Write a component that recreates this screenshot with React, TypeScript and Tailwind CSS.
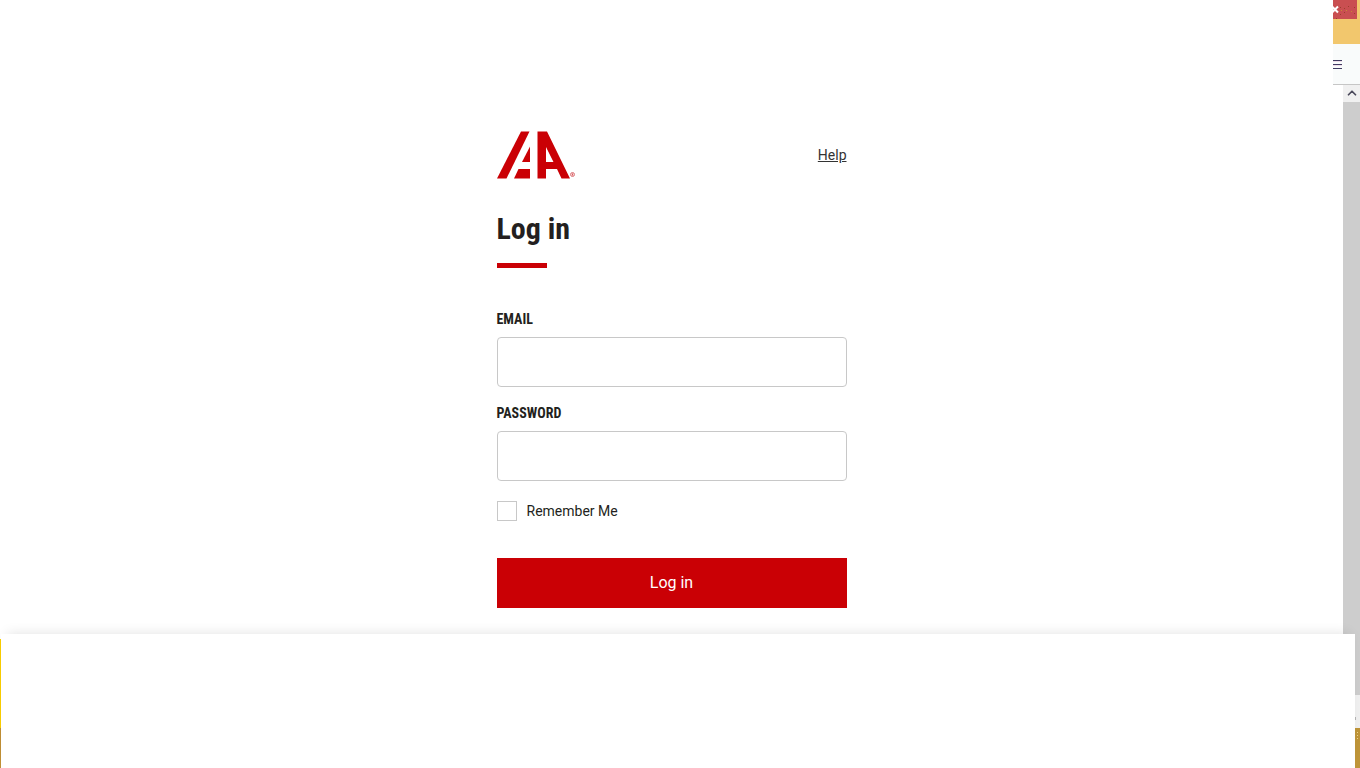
import { ChevronUp } from 'lucide-react';

const condensed = "font-['Roboto_Condensed','Roboto',sans-serif]";

function Logo() {
  return (
    <svg width="80" height="48" viewBox="0 0 80 48" fill="#ca0005" role="img" aria-label="IAA">
      <path d="M24 0.5H32.5L9.5 47.5H0Z" />
      <path d="M33 15.5V31H25Z" />
      <path d="M21.5 38H33V47.5H17Z" />
      <path fillRule="evenodd" d="M40.5 0.5H50L73 47.5H64.5L60 38H49V47.5H40.5ZM49 16V31H56.5Z" />
      <circle cx="75.5" cy="43.5" r="2" fill="#f6d5d6" stroke="#dc7a7e" strokeWidth="1" />
      <path d="M75 42.5h1v2h-1z" fill="#dc5a5e" />
    </svg>
  );
}

function WindowEdge() {
  return (
    <header className="flex h-[85px] justify-end">
      <div className="flex w-[27px] flex-col border-b border-[#c6c6c6] bg-[#f9fbfb]">
        <div className="h-11 bg-[#f2c76d]">
          <button
            type="button"
            aria-label="Close"
            className="flex h-[19px] w-6 items-center overflow-hidden bg-[#c94f51] text-white"
          >
            <svg width="24" height="19" viewBox="0 0 24 19">
              <path d="M-1 6.5L5 12.5M5 6.5L-1 12.5" stroke="currentColor" strokeWidth="2" />
              <g fill="#9a3f2c">
                <path d="M7 7h1v1h-1zM11 8h1v1h-1zM15 6h1v1h-1zM21 7h1v1h-1zM7 14h1v1h-1zM11 12h1v1h-1zM21 13h1v1h-1zM3 18h1v1h-1z" />
              </g>
              <g fill="#c98a35">
                <path d="M8 10h1v1h-1zM13 10h1v1h-1zM18 11h1v1h-1z" />
              </g>
            </svg>
          </button>
        </div>
        <button type="button" aria-label="Menu" className="flex flex-1 items-center">
          <svg width="9" height="11" viewBox="0 0 9 11">
            <path d="M0 1h9v1h-9zM0 5h9v1h-9zM0 9h9v1h-9z" fill="#403c62" />
            <path d="M0 2h9v1h-9zM0 6h9v1h-9z" fill="#efdcea" />
          </svg>
        </button>
      </div>
    </header>
  );
}

function ScrollBar() {
  return (
    <div className="flex w-[17px] flex-col bg-[#f0f0f0]">
      <button
        type="button"
        aria-label="Scroll up"
        className="flex h-[17px] items-start justify-center pt-px text-[#4b4a5c]"
      >
        <ChevronUp size={14} strokeWidth={3} />
      </button>
      <div className="flex-1 bg-[#cdcdcd]" />
      <div className="flex h-[33px] items-end pb-2 pl-3">
        <span className="h-[3px] w-px bg-[#b5b5b5]" />
      </div>
    </div>
  );
}

interface FieldProps {
  id: string;
  label: string;
  type: string;
}

function Field({ id, label, type }: FieldProps) {
  return (
    <div className="flex flex-col gap-2">
      <label htmlFor={id} className={`${condensed} text-sm leading-5 font-bold text-[#231f20] uppercase`}>
        {label}
      </label>
      <input
        id={id}
        type={type}
        className="h-[50px] w-full rounded border border-[#c8c8c8] bg-white px-3 text-base"
      />
    </div>
  );
}

function LoginForm() {
  return (
    <form className="w-full max-w-[350px] pt-[46px]" onSubmit={(e) => e.preventDefault()}>
      <div className="flex items-center justify-between">
        <Logo />
        <a href="#help" className="text-sm text-[#333] underline">
          Help
        </a>
      </div>
      <h1 className={`${condensed} mt-8 text-3xl leading-9 font-bold text-[#231f20]`}>Log in</h1>
      <div className="mt-4 h-[5px] w-[50px] bg-[#ca0005]" />
      <div className="mt-10 flex flex-col gap-4 pt-px">
        <Field id="email" label="Email" type="email" />
        <Field id="password" label="Password" type="password" />
      </div>
      <div className="mt-5 flex items-center gap-[10px]">
        <input
          id="remember"
          type="checkbox"
          className="size-5 appearance-none border border-[#c8c8c8] bg-white checked:bg-[#ca0005]"
        />
        <label htmlFor="remember" className="text-sm text-[#231f20]">
          Remember Me
        </label>
      </div>
      <button type="submit" className="mt-[37px] h-[50px] w-full bg-[#ca0005] text-base text-white">
        Log in
      </button>
    </form>
  );
}

function TaskBar() {
  return (
    <div className="flex h-10 justify-end bg-[#bf9539] pt-1 pr-[2px]">
      <div className="flex flex-col gap-[2px]">
        <span className="size-px bg-[#f2d68a]" />
        <span className="size-px bg-[#f2d68a]" />
        <span className="size-px bg-[#f2d68a]" />
      </div>
    </div>
  );
}

function BottomSheet() {
  return (
    <div className="absolute inset-x-0 bottom-0 flex h-[134px] pr-[5px]">
      <div className="flex w-px flex-col pt-[5px]">
        <div className="flex-1 bg-[#fbcf00]" />
        <div className="h-10 bg-[#c08f35]" />
      </div>
      <div className="flex-1 bg-white shadow-[0_-6px_12px_-6px_rgba(0,0,0,0.12)]" />
    </div>
  );
}

export default function App() {
  return (
    <div className="relative flex min-h-screen flex-col overflow-hidden bg-white font-['Roboto',sans-serif]">
      <WindowEdge />
      <div className="flex flex-1">
        <main className="flex flex-1 justify-center">
          <LoginForm />
        </main>
        <ScrollBar />
      </div>
      <TaskBar />
      <BottomSheet />
    </div>
  );
}
